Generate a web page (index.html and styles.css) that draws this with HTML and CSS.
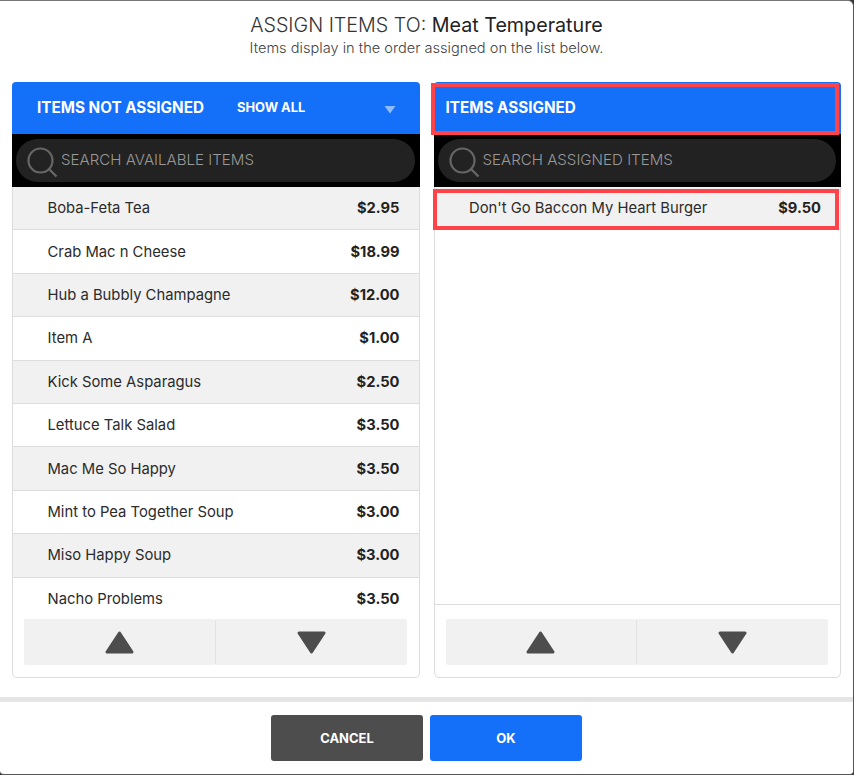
FILE: index.html
```html
<!DOCTYPE html>
<html lang="en">
<head>
<meta charset="utf-8">
<title>Assign Items</title>
<link rel="stylesheet" href="styles.css">
</head>
<body>
<div class="dialog">
  <div class="heading">
    <h1 class="title">ASSIGN ITEMS TO: <span class="title-name">Meat Temperature</span></h1>
    <p class="subtitle">Items display in the order assigned on the list below.</p>
  </div>
  <div class="columns">
    <section class="panel">
      <header class="panel-head">
        <span class="head-title">ITEMS NOT ASSIGNED</span>
        <span class="head-filter">SHOW ALL</span>
        <svg class="head-caret" width="12" height="9" viewBox="0 0 12 9"><path d="M0.5 1H11.5L6 8.5Z" fill="#8fbcfb"/></svg>
      </header>
      <div class="search-bar">
        <div class="search-pill">
          <svg class="search-icon" width="31" height="31" viewBox="0 0 31 31"><circle cx="13.5" cy="13.5" r="12" fill="none" stroke="#666" stroke-width="2.2"/><path d="M22 22L29.5 29.5" stroke="#666" stroke-width="2.4"/></svg>
          <span class="search-text">SEARCH AVAILABLE ITEMS</span>
        </div>
      </div>
      <ul class="rows rows-clipped">
        <li class="row"><span>Boba-Feta Tea</span><b class="price">$2.95</b></li>
        <li class="row"><span>Crab Mac n Cheese</span><b class="price">$18.99</b></li>
        <li class="row"><span>Hub a Bubbly Champagne</span><b class="price">$12.00</b></li>
        <li class="row"><span>Item A</span><b class="price">$1.00</b></li>
        <li class="row"><span>Kick Some Asparagus</span><b class="price">$2.50</b></li>
        <li class="row"><span>Lettuce Talk Salad</span><b class="price">$3.50</b></li>
        <li class="row"><span>Mac Me So Happy</span><b class="price">$3.50</b></li>
        <li class="row"><span>Mint to Pea Together Soup</span><b class="price">$3.00</b></li>
        <li class="row"><span>Miso Happy Soup</span><b class="price">$3.00</b></li>
        <li class="row"><span>Nacho Problems</span><b class="price">$3.50</b></li>
      </ul>
      <div class="arrows">
        <button class="arrow"><svg width="29" height="23" viewBox="0 0 29 23"><path d="M14.5 2L27 21H2Z" fill="#4d4d4d" stroke="#4d4d4d" stroke-width="3" stroke-linejoin="round"/></svg></button>
        <button class="arrow"><svg width="29" height="23" viewBox="0 0 29 23"><path d="M14.5 21L27 2H2Z" fill="#4d4d4d" stroke="#4d4d4d" stroke-width="3" stroke-linejoin="round"/></svg></button>
      </div>
    </section>
    <section class="panel">
      <header class="panel-head panel-head-assigned">
        <span class="head-title">ITEMS ASSIGNED</span>
      </header>
      <div class="search-bar">
        <div class="search-pill">
          <svg class="search-icon" width="31" height="31" viewBox="0 0 31 31"><circle cx="13.5" cy="13.5" r="12" fill="none" stroke="#666" stroke-width="2.2"/><path d="M22 22L29.5 29.5" stroke="#666" stroke-width="2.4"/></svg>
          <span class="search-text">SEARCH ASSIGNED ITEMS</span>
        </div>
      </div>
      <ul class="rows">
        <li class="row row-marked"><span>Don't Go Baccon My Heart Burger</span><b class="price">$9.50</b></li>
      </ul>
      <div class="arrows arrows-ruled">
        <button class="arrow"><svg width="29" height="23" viewBox="0 0 29 23"><path d="M14.5 2L27 21H2Z" fill="#4d4d4d" stroke="#4d4d4d" stroke-width="3" stroke-linejoin="round"/></svg></button>
        <button class="arrow"><svg width="29" height="23" viewBox="0 0 29 23"><path d="M14.5 21L27 2H2Z" fill="#4d4d4d" stroke="#4d4d4d" stroke-width="3" stroke-linejoin="round"/></svg></button>
      </div>
    </section>
  </div>
  <div class="actions">
    <button class="btn btn-cancel">CANCEL</button>
    <button class="btn btn-ok">OK</button>
  </div>
</div>
</body>
</html>
```
FILE: styles.css
```css
* { box-sizing: border-box; }
html, body { margin: 0; height: 100%; background: #333; }
body { font-family: "Inter", "Liberation Sans", sans-serif; color: #222; overflow: hidden; }
.dialog {
  width: 854px;
  height: 775px;
  padding-top: 1px;
  background: #fff;
  border-top: 1px solid #777;
  border-right: 1px solid #555;
  border-bottom: 1px solid #555;
  border-radius: 0 6px 4px 4px;
  display: flex;
  flex-direction: column;
}
.heading { text-align: center; padding-top: 11px; height: 80px; }
.title { margin: 0; font-size: 19.7px; line-height: 25px; font-weight: 300; color: #333; }
.title-name { font-weight: 400; color: #222; }
.subtitle { margin: 0; font-size: 14.6px; line-height: 20px; font-weight: 300; color: #444; }
.columns { display: flex; gap: 14px; padding: 0 12px; }
.panel {
  width: 408px;
  height: 596px;
  display: flex;
  flex-direction: column;
  border-bottom: 1px solid #ddd;
  border-radius: 5px;
}
.panel-head {
  position: relative;
  flex: none;
  height: 52px;
  padding: 0 23px 2px 25px;
  background: #1470f9;
  border-radius: 4px 4px 0 0;
  color: #fff;
  display: flex;
  align-items: center;
  font-weight: 700;
}
.panel-head-assigned { padding-left: 12px; }
.panel-head-assigned::after {
  content: "";
  position: absolute;
  top: 1px;
  right: 2px;
  bottom: -1px;
  left: -3px;
  border: 4px solid #ff4349;
}
.head-title { font-size: 15.25px; white-space: nowrap; }
.head-filter { font-size: 12.9px; margin-left: 33px; flex: 1; }
.head-caret { margin-top: 4px; margin-right: 1px; }
.search-bar { flex: none; height: 53px; padding: 5px 5px 5px 4px; background: #000; }
.search-pill {
  height: 43px;
  border-radius: 22px;
  background: #222;
  display: flex;
  align-items: center;
  padding-left: 11px;
  color: #999;
}
.search-icon { flex: none; margin-top: 3px; }
.search-text { margin-left: 3px; padding-bottom: 2px; font-size: 15.1px; font-weight: 300; }
.rows {
  list-style: none;
  margin: 0;
  padding: 0;
  flex: 1;
  min-height: 0;
  border-left: 1px solid #ddd;
  border-right: 1px solid #ddd;
}
.rows-clipped { overflow: hidden; }
.row {
  position: relative;
  height: 43.4px;
  display: flex;
  align-items: center;
  justify-content: space-between;
  padding: 0 19px 0 34.5px;
  font-size: 14.8px;
  font-weight: 400;
  color: #2b2b2b;
  border-bottom: 1px solid #ddd;
}
.row:nth-child(odd) { background: #f1f1f1; }
.price { font-weight: 700; font-size: 14.7px; color: #222; }
.row-marked::after {
  content: "";
  position: absolute;
  top: 2px;
  right: 1px;
  bottom: -1px;
  left: -2px;
  border: 4px solid #ff4349;
}
.arrows {
  flex: none;
  height: 72px;
  margin-top: -15px;
  padding: 14px 12px 12px 11px;
  display: flex;
  background: #fff;
  border-left: 1px solid #ddd;
  border-right: 1px solid #ddd;
  border-radius: 0 0 5px 5px;
}
.arrows-ruled { height: 73px; margin-top: 0; border-top: 1px solid #ddd; }
.arrow {
  flex: 1;
  height: 46px;
  padding: 0;
  border: 0;
  background: #f1f1f1;
  border-radius: 2px;
  display: flex;
  align-items: center;
  justify-content: center;
}
.arrow + .arrow { border-left: 1px solid #e2e2e2; }
.actions {
  flex: 1;
  margin-top: 19px;
  border-top: 5px solid #e5e5e5;
  display: flex;
  justify-content: center;
  align-items: flex-start;
  gap: 7px;
  padding-top: 13px;
}
.btn {
  width: 152px;
  height: 46px;
  border: 0;
  border-radius: 3px;
  color: #fff;
  font-family: inherit;
  font-size: 13px;
  font-weight: 700;
}
.btn-cancel { background: #4d4d4d; }
.btn-ok { background: #1470f9; }
```
